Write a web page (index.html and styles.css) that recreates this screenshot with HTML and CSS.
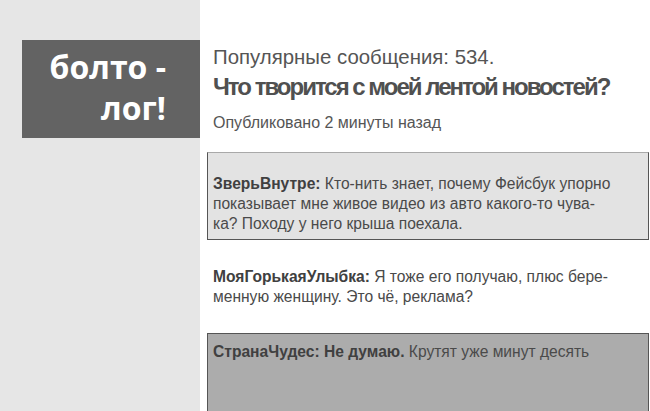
FILE: index.html
```html
<!DOCTYPE html>
<html lang="ru">

<head>
    <meta charset="UTF-8">
    <title>болто - лог!</title>
    <link rel="stylesheet" href="styles.css">
</head>

<body>
    <div class="sidebar">
        <div class="logo">болто -<br>лог!</div>
    </div>
    <div class="main">
        <div class="post-head">
            <div class="popular">Популярные сообщения: 534.</div>
            <h1 class="post-title">Что творится с моей лентой новостей?</h1>
            <div class="post-time">Опубликовано 2 минуты назад</div>
        </div>
        <div class="comment comment-first">
            <b>ЗверьВнутре:</b> Кто-нить знает, почему Фейсбук упорно<br>
            показывает мне живое видео из авто какого-то чува-<br>
            ка? Походу у него крыша поехала.
        </div>
        <div class="comment comment-plain">
            <b>МояГорькаяУлыбка:</b> Я тоже его получаю, плюс бере-<br>
            менную женщину. Это чё, реклама?
        </div>
        <div class="comment comment-dark">
            <b>СтранаЧудес: Не думаю.</b> Крутят уже минут десять
        </div>
    </div>
</body>

</html>
```

FILE: styles.css
```css
body {
    margin: 0;
    padding: 0;
    display: flex;
    flex-direction: row;
    height: 100vh;
    overflow: hidden;
    background-color: #ffffff;
    font-family: "Liberation Sans", Arial, sans-serif;
    color: #555555;
}

.sidebar {
    width: 200px;
    flex-shrink: 0;
    background-color: #e6e6e6;
    padding-top: 40px;
    box-sizing: border-box;
}

.logo {
    margin-left: 22px;
    height: 98px;
    box-sizing: border-box;
    padding: 6px 34px 0 0;
    background-color: #636363;
    color: #ffffff;
    font-family: "Open Sans", sans-serif;
    font-weight: 700;
    font-size: 32px;
    line-height: 41px;
    text-align: right;
}

.main {
    flex: 1;
    padding: 0 1px 0 7px;
    display: flex;
    flex-direction: column;
}

.post-head {
    padding: 44px 0 0 6px;
    height: 152px;
    box-sizing: border-box;
}

.popular {
    font-size: 20.4px;
    line-height: 26px;
}

.post-title {
    margin: 3px 0 0;
    font-size: 24px;
    line-height: 28px;
    font-weight: 700;
    letter-spacing: -2px;
    color: #505050;
}

.post-time {
    margin-top: 12px;
    font-size: 16px;
    line-height: 20px;
}

.comment {
    font-size: 15.6px;
    line-height: 20px;
    color: #4a4a4a;
    padding: 8px 5px;
}

.comment b {
    color: #404040;
}

.comment-first {
    background-color: #e3e3e3;
    border: 1px solid #555555;
    border-top-color: #a9a9a9;
    padding: 21px 5px 5px;
}

.comment-plain {
    padding: 27px 6px 26px;
}

.comment-dark {
    flex: 1;
    background-color: #acacac;
    border: 1px solid #555555;
    border-bottom: none;
}
```
